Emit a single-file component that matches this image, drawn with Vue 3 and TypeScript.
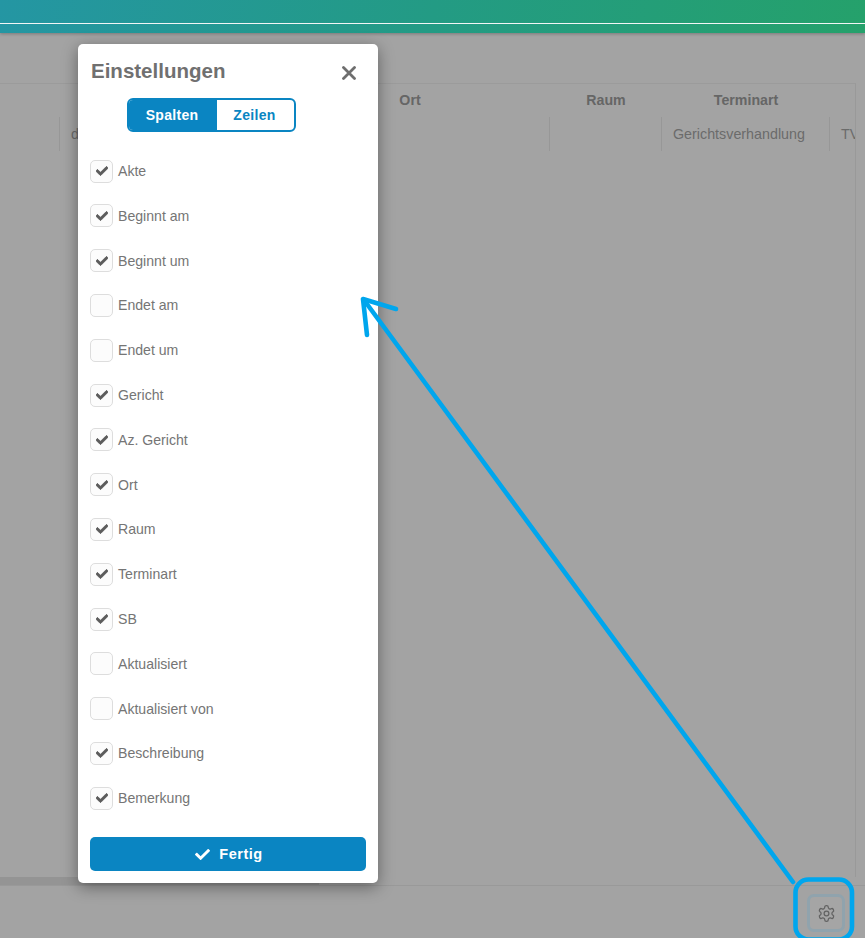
<script setup lang="ts">
interface Option { label: string; checked: boolean }
const options: Option[] = [
  { label: 'Akte', checked: true },
  { label: 'Beginnt am', checked: true },
  { label: 'Beginnt um', checked: true },
  { label: 'Endet am', checked: false },
  { label: 'Endet um', checked: false },
  { label: 'Gericht', checked: true },
  { label: 'Az. Gericht', checked: true },
  { label: 'Ort', checked: true },
  { label: 'Raum', checked: true },
  { label: 'Terminart', checked: true },
  { label: 'SB', checked: true },
  { label: 'Aktualisiert', checked: false },
  { label: 'Aktualisiert von', checked: false },
  { label: 'Beschreibung', checked: true },
  { label: 'Bemerkung', checked: true },
]
const checkPath = 'M173.898 439.404l-166.4-166.4c-9.997-9.997-9.997-26.206 0-36.204l36.203-36.204c9.997-9.998 26.207-9.998 36.204 0L192 312.69 432.095 72.596c9.997-9.997 26.207-9.997 36.204 0l36.203 36.204c9.997 9.997 9.997 26.206 0 36.204l-294.4 294.401c-9.998 9.997-26.207 9.997-36.204-.001z'
</script>

<template>
  <div class="page">
    <header class="topbar"><div class="topline"></div></header>
    <div class="main">
      <div class="tablewrap">
        <div class="row head">
          <div class="c c1"></div><div class="c c2"></div>
          <div class="c c3">Ort</div><div class="c c4">Raum</div><div class="c c5">Terminart</div><div class="c c6"></div>
        </div>
        <div class="row body">
          <div class="c c1"></div><div class="c c2">d</div>
          <div class="c c3"></div><div class="c c4"></div><div class="c c5">Gerichtsverhandlung</div><div class="c c6">TV</div>
        </div>
      </div>
      <div class="scrollbar"></div>
    </div>
    <footer class="footer">
      <button class="gearbtn" type="button" aria-label="Einstellungen">
        <svg width="19" height="19" viewBox="0 0 24 24" fill="none" stroke="#636363" stroke-width="1.6" stroke-linejoin="round">
          <path d="M12.22 2h-.44a2 2 0 0 0-2 2v.18a2 2 0 0 1-1 1.73l-.43.25a2 2 0 0 1-2 0l-.15-.08a2 2 0 0 0-2.73.73l-.22.38a2 2 0 0 0 .73 2.73l.15.1a2 2 0 0 1 1 1.72v.51a2 2 0 0 1-1 1.74l-.15.09a2 2 0 0 0-.73 2.73l.22.38a2 2 0 0 0 2.73.73l.15-.08a2 2 0 0 1 2 0l.43.25a2 2 0 0 1 1 1.73V20a2 2 0 0 0 2 2h.44a2 2 0 0 0 2-2v-.18a2 2 0 0 1 1-1.73l.43-.25a2 2 0 0 1 2 0l.15.08a2 2 0 0 0 2.73-.73l.22-.39a2 2 0 0 0-.73-2.73l-.15-.08a2 2 0 0 1-1-1.74v-.5a2 2 0 0 1 1-1.74l.15-.09a2 2 0 0 0 .73-2.73l-.22-.38a2 2 0 0 0-2.73-.73l-.15.08a2 2 0 0 1-2 0l-.43-.25a2 2 0 0 1-1-1.73V4a2 2 0 0 0-2-2z"/>
          <circle cx="12" cy="12" r="3"/>
        </svg>
      </button>
    </footer>

    <section class="modal">
      <div class="modalhead">
        <h2 class="title">Einstellungen</h2>
        <svg class="close" width="14" height="14" viewBox="0 0 14 14" stroke="#6e6e6e" stroke-width="2.8" stroke-linecap="round">
          <path d="M1.5 1.5l11 11M12.5 1.5l-11 11"/>
        </svg>
      </div>
      <div class="segment">
        <span class="seg active">Spalten</span>
        <span class="seg">Zeilen</span>
      </div>
      <ul class="list">
        <li v-for="o in options" :key="o.label" class="item">
          <span class="box">
            <svg v-if="o.checked" width="12" height="12" viewBox="0 0 512 512" fill="#5c5c5c" stroke="#5c5c5c" stroke-width="36"><path :d="checkPath"/></svg>
          </span>
          <span class="label">{{ o.label }}</span>
        </li>
      </ul>
      <button class="done" type="button">
        <svg width="15" height="15" viewBox="0 0 512 512" fill="#fff"><path :d="checkPath"/></svg>
        <span>Fertig</span>
      </button>
    </section>

    <svg class="annot" width="865" height="938" viewBox="0 0 865 938" fill="none" stroke="#00a6ed" stroke-width="4.6" stroke-linecap="round" stroke-linejoin="round">
      <rect x="795.5" y="879.5" width="56.5" height="60" rx="13"/>
      <path d="M793 882L364 300"/>
      <path d="M396 309L363 299L367 335"/>
    </svg>
  </div>
</template>

<style>
html, body { margin: 0; background: #a3a3a3; }
</style>

<style scoped>
.page {
  position: relative;
  width: 865px;
  height: 938px;
  overflow: hidden;
  display: flex;
  flex-direction: column;
  background: #a3a3a3;
  font-family: "Liberation Sans", Arial, sans-serif;
  color: #6b6b6b;
}
.topbar {
  height: 33px;
  flex: none;
  padding-top: 23px;
  box-sizing: border-box;
  background: linear-gradient(100deg, #2496a3 0%, #239b84 50%, #25a16b 100%);
  box-shadow: 0 1px 3px rgba(0, 0, 0, .25);
}
.topline { height: 1px; background: #f2f5f5; }
.main {
  flex: none;
  height: 853px;
  padding-top: 50px;
  box-sizing: border-box;
  position: relative;
  display: flex;
  flex-direction: column;
  border-bottom: 1px solid #999;
}
.tablewrap {
  width: 856px;
  flex: 1;
  box-sizing: border-box;
  border-top: 1px solid #9b9b9b;
  border-right: 1px solid #999;
  overflow: hidden;
}
.row { display: flex; height: 34px; width: 900px; font-size: 14.3px; }
.head { height: 33px; font-size: 14.2px; font-weight: 700; background: #a3a3a3; color: #666; }
.head .c { text-align: center; line-height: 33px; border: 0; }
.head .c4, .head .c5 { padding-left: 2px; box-sizing: border-box; }
.body .c { line-height: 34px; padding-left: 11px; box-sizing: border-box; border-left: 1px solid #979797; }
.c { flex: none; white-space: nowrap; }
.c1 { width: 59px; }
.c2 { width: 212px; }
.c3 { width: 278px; }
.c4 { width: 112px; }
.c5 { width: 168px; }
.c6 { width: 40px; }
.body .c1, .body .c3 { border-left: 0; }
.scrollbar { width: 319px; height: 8px; background: #949494; flex: none; }
.footer {
  flex: 1;
  display: flex;
  justify-content: flex-end;
  align-items: flex-start;
  padding: 8px 20px 0 0;
}
.gearbtn {
  width: 38px;
  height: 38px;
  box-sizing: border-box;
  border: 3px solid #90a3ad;
  border-radius: 7px;
  background: #a5a5a5;
  padding: 0;
  display: flex;
  align-items: center;
  justify-content: center;
}
.modal {
  position: absolute;
  left: 78px;
  top: 44px;
  width: 300px;
  height: 839px;
  box-sizing: border-box;
  padding: 0 12px 12px;
  background: #fff;
  border-radius: 5px;
  box-shadow: 0 4px 16px rgba(0, 0, 0, .4);
  display: flex;
  flex-direction: column;
}
.modalhead {
  height: 54px;
  flex: none;
  display: flex;
  align-items: center;
  justify-content: space-between;
  padding: 0 10px 0 1px;
}
.title { margin: 0; font-size: 20.5px; font-weight: 700; color: #707070; }
.close { display: block; position: relative; top: 2px; }
.segment {
  align-self: flex-start;
  margin-left: 37px;
  display: flex;
  width: 169px;
  height: 34px;
  box-sizing: border-box;
  border: 2px solid #0a85c2;
  border-radius: 6px;
  overflow: hidden;
  flex: none;
}
.seg {
  display: flex;
  align-items: center;
  justify-content: center;
  font-size: 14px;
  font-weight: 700;
  letter-spacing: .3px;
  color: #0a85c2;
  flex: 1;
  padding-right: 2px;
}
.seg.active { width: 88px; flex: none; box-sizing: border-box; background: #0a85c2; color: #fff; }
.list {
  list-style: none;
  margin: 16.7px 0 0;
  padding: 0;
  flex: none;
}
.item { height: 44.8px; display: flex; align-items: center; gap: 5px; }
.box {
  width: 23px;
  height: 23px;
  box-sizing: border-box;
  border: 1px solid #ddd;
  border-radius: 5px;
  background: #fcfcfc;
  display: flex;
  align-items: center;
  justify-content: center;
  flex: none;
}
.label { font-size: 14.1px; color: #757575; }
.done {
  margin-top: auto;
  height: 34px;
  flex: none;
  border: 0;
  border-radius: 5px;
  background: #0a85c2;
  color: #fff;
  font-family: inherit;
  font-size: 14.5px;
  font-weight: 700;
  letter-spacing: .5px;
  display: flex;
  align-items: center;
  justify-content: center;
  gap: 9px;
  padding: 0 0 0 2px;
}
.annot { position: absolute; left: 0; top: 0; pointer-events: none; }
</style>
